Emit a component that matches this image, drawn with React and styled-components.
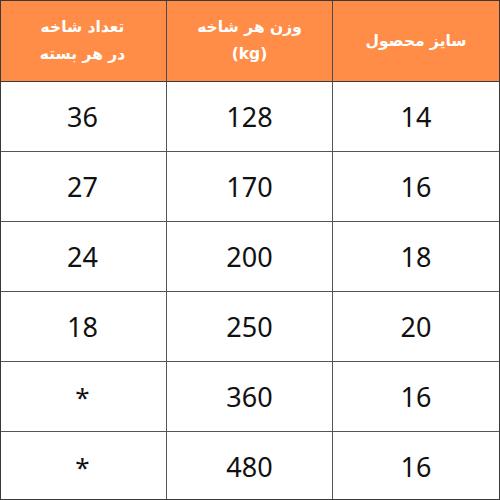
import React from "react";
import styled, { createGlobalStyle } from "styled-components";

const rows = [
    ["14", "128", "36"],
    ["16", "170", "27"],
    ["18", "200", "24"],
    ["20", "250", "18"],
    ["16", "360", "*"],
    ["16", "480", "*"],
];

const App = () => {
    return (
        <>
            <GlobalStyle />
            <Table dir="rtl">
                <HeadCell>سایز محصول</HeadCell>
                <HeadCell>
                    <span>وزن هر شاخه</span>
                    <span>(kg)</span>
                </HeadCell>
                <HeadCell>
                    <span>تعداد شاخه</span>
                    <span>در هر بسته</span>
                </HeadCell>
                {rows.map((row, i) =>
                    row.map((value, j) => (
                        <Cell key={`${i}-${j}`} $star={value === "*"}>
                            {value}
                        </Cell>
                    ))
                )}
            </Table>
        </>
    );
};

export default App;

const GlobalStyle = createGlobalStyle`
    body {
        margin: 0;
        background: #ffffff;
    }
`;

const Table = styled.div`
    display: grid;
    grid-template-columns: 167px 166px 167px;
    grid-template-rows: 81px repeat(6, 70px);
    width: 500px;
    height: 500px;
    box-sizing: border-box;
    border: 1px solid #3a3a3a;
    background: #ffffff;
    overflow: hidden;
`;

const HeadCell = styled.div`
    display: flex;
    flex-direction: column;
    align-items: center;
    justify-content: center;
    gap: 6px;
    background: #ff8d48;
    color: #ffffff;
    font-family: "DejaVu Sans", "Noto Sans", sans-serif;
    font-weight: 700;
    font-size: 15.5px;
    line-height: 21px;
    border-left: 1px solid #4a4a4a;
    border-bottom: 1px solid #3a3a3a;

    &:nth-child(3) {
        border-left: none;
    }
`;

const Cell = styled.div`
    display: flex;
    align-items: center;
    justify-content: center;
    font-family: "Noto Sans", "Open Sans", sans-serif;
    font-size: ${(p) => (p.$star ? "26px" : "27px")};
    color: #111111;
    border-left: 1px solid #555555;
    border-bottom: 1px solid #555555;

    &:nth-child(3n) {
        border-left: none;
    }
`;
